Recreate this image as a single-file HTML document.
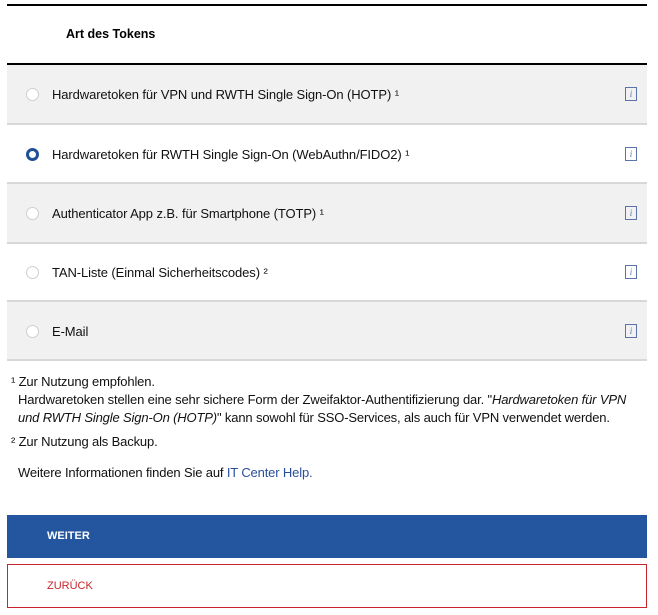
<!DOCTYPE html>
<html><head><meta charset="utf-8"><style>
body{margin:0;background:#fff;font-family:"Liberation Sans",sans-serif;color:#000;width:658px;height:615px;position:relative;overflow:hidden}
.abs{position:absolute}
.line{position:absolute;left:7px;width:640px}
.row{position:absolute;left:7px;width:640px;height:58px}
.row .t{position:absolute;left:45px;top:22px;font-size:13px;color:#111;letter-spacing:-0.1px}
.row .r{position:absolute;left:19px;top:23px;width:11px;height:11px;border:1px solid #cfcfcf;border-radius:50%;background:#fff}
.row .r.on{border:3px solid #1f4f95;width:7px;height:7px}
.row .i{position:absolute;left:618px;top:22px;width:10px;height:12px;border:1px solid #5b73a8;font:italic 9px "Liberation Serif",serif;color:#5b73a8;text-align:center;line-height:12px}
.g{background:#f1f1f1}
.sep{position:absolute;left:7px;width:640px;height:2px;background:#d8d8d8}
.ft{position:absolute;font-size:13px;color:#111;line-height:18px;letter-spacing:-0.15px}
</style></head><body>
<div class="line" style="top:4px;height:2px;background:#000"></div>
<div class="abs" style="left:66px;top:27px;font-size:12.5px;font-weight:bold">Art des Tokens</div>
<div class="line" style="top:63px;height:2px;background:#000"></div>

<div class="row g" style="top:65px"><span class="r"></span><span class="t">Hardwaretoken für VPN und RWTH Single Sign-On (HOTP) ¹</span><span class="i">i</span></div>
<div class="sep" style="top:123px"></div>
<div class="row" style="top:125px"><span class="r on"></span><span class="t">Hardwaretoken für RWTH Single Sign-On (WebAuthn/FIDO2) ¹</span><span class="i">i</span></div>
<div class="sep" style="top:182px"></div>
<div class="row g" style="top:184px"><span class="r"></span><span class="t">Authenticator App z.B. für Smartphone (TOTP) ¹</span><span class="i">i</span></div>
<div class="sep" style="top:242px"></div>
<div class="row" style="top:243px"><span class="r"></span><span class="t">TAN-Liste (Einmal Sicherheitscodes) ²</span><span class="i">i</span></div>
<div class="sep" style="top:300px"></div>
<div class="row g" style="top:302px"><span class="r"></span><span class="t">E-Mail</span><span class="i">i</span></div>
<div class="sep" style="top:359px"></div>

<div class="ft" style="left:11px;top:373px">¹ Zur Nutzung empfohlen.</div>
<div class="ft" style="left:18px;top:391px;width:630px">Hardwaretoken stellen eine sehr sichere Form der Zweifaktor-Authentifizierung dar. "<i>Hardwaretoken für VPN und RWTH Single Sign-On (HOTP)</i>" kann sowohl für SSO-Services, als auch für VPN verwendet werden.</div>
<div class="ft" style="left:11px;top:433px">² Zur Nutzung als Backup.</div>
<div class="ft" style="left:18px;top:464px">Weitere Informationen finden Sie auf <span style="color:#2a4f9a">IT Center Help.</span></div>

<div class="abs" style="left:7px;top:515px;width:640px;height:43px;background:#23569e"><span class="abs" style="left:40px;top:15px;color:#fff;font-size:11px;font-weight:bold">WEITER</span></div>
<div class="abs" style="left:7px;top:564px;width:638px;height:42px;border:1px solid #c8262c"><span class="abs" style="left:39px;top:15px;color:#c8262c;font-size:11px">ZURÜCK</span></div>
</body></html>
